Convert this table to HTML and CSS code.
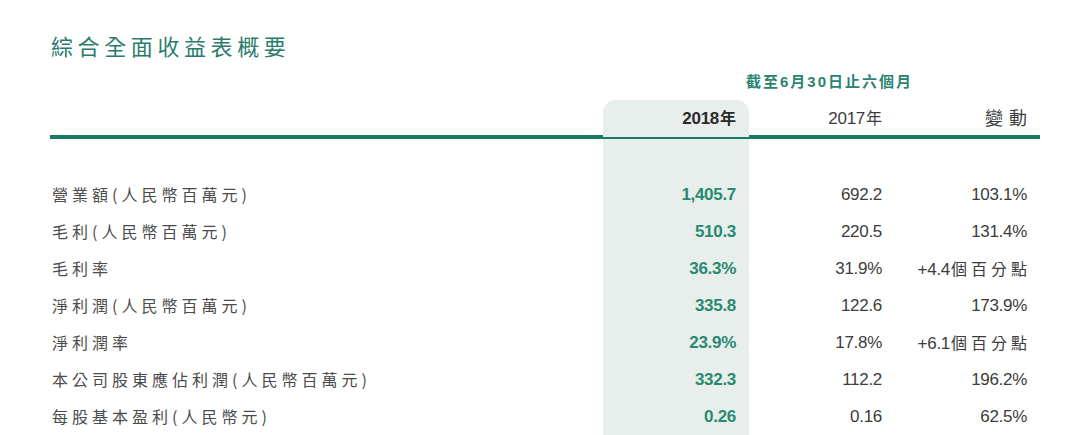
FILE: index.html
```html
<!DOCTYPE html>
<html lang="zh-Hant">
<head>
<meta charset="utf-8">
<title>綜合全面收益表概要</title>
<link rel="stylesheet" href="styles.css">
</head>
<body>
<div class="page">
  <h1 class="title">綜合全面收益表概要</h1>
  <div class="period">截至6月30日止六個月</div>
  <div class="table">
    <div class="row head">
      <div class="cell label"></div>
      <div class="cell num hl top strong">2018<span class="cj">年</span></div>
      <div class="cell num">2017<span class="cj">年</span></div>
      <div class="cell num"><span class="cj wide">變動</span></div>
    </div>
    <div class="row spacer">
      <div class="cell label"></div>
      <div class="cell num hl"></div>
      <div class="cell num"></div>
      <div class="cell num"></div>
    </div>
    <div class="row">
      <div class="cell label">營業額(人民幣百萬元)</div>
      <div class="cell num hl strong">1,405.7</div>
      <div class="cell num">692.2</div>
      <div class="cell num">103.1%</div>
    </div>
    <div class="row">
      <div class="cell label">毛利(人民幣百萬元)</div>
      <div class="cell num hl strong">510.3</div>
      <div class="cell num">220.5</div>
      <div class="cell num">131.4%</div>
    </div>
    <div class="row">
      <div class="cell label">毛利率</div>
      <div class="cell num hl strong">36.3%</div>
      <div class="cell num">31.9%</div>
      <div class="cell num">+4.4<span class="cj">個百分點</span></div>
    </div>
    <div class="row">
      <div class="cell label">淨利潤(人民幣百萬元)</div>
      <div class="cell num hl strong">335.8</div>
      <div class="cell num">122.6</div>
      <div class="cell num">173.9%</div>
    </div>
    <div class="row">
      <div class="cell label">淨利潤率</div>
      <div class="cell num hl strong">23.9%</div>
      <div class="cell num">17.8%</div>
      <div class="cell num">+6.1<span class="cj">個百分點</span></div>
    </div>
    <div class="row">
      <div class="cell label">本公司股東應佔利潤(人民幣百萬元)</div>
      <div class="cell num hl strong">332.3</div>
      <div class="cell num">112.2</div>
      <div class="cell num">196.2%</div>
    </div>
    <div class="row">
      <div class="cell label">每股基本盈利(人民幣元)</div>
      <div class="cell num hl strong">0.26</div>
      <div class="cell num">0.16</div>
      <div class="cell num">62.5%</div>
    </div>
  </div>
</div>
</body>
</html>
```

FILE: styles.css
```css
html, body {
  margin: 0;
  padding: 0;
  background: #ffffff;
}

body {
  font-family: "Liberation Sans", "Noto Sans CJK TC", sans-serif;
  color: #3a3a3a;
  overflow: hidden;
}

.page {
  width: 990px;
  padding-left: 50px;
}

.title {
  margin: 0;
  padding-top: 30px;
  padding-left: 1px;
  height: 30px;
  line-height: 30px;
  font-family: "Noto Sans CJK TC", sans-serif;
  font-size: 22px;
  font-weight: 400;
  letter-spacing: 4.6px;
  color: #2b7b6c;
}

.period {
  margin-left: 569px;
  width: 421px;
  padding-top: 4px;
  height: 36px;
  line-height: 36px;
  text-align: center;
  font-family: "Liberation Sans", "Noto Sans CJK TC", sans-serif;
  font-size: 15px;
  font-weight: 700;
  letter-spacing: 2px;
  color: #2a8470;
}

.row {
  display: grid;
  grid-template-columns: 553px 146px 146px 145px;
  height: 37px;
  line-height: 37px;
}

.row.head {
  height: 35px;
  line-height: 35px;
  border-bottom: 4px solid #187a67;
}

.cell {
  white-space: nowrap;
  font-size: 17px;
  letter-spacing: -0.3px;
}

.label {
  padding-left: 2px;
  font-family: "Noto Sans CJK TC", sans-serif;
  font-size: 16px;
  letter-spacing: 4px;
  color: #4c4c4c;
}

.num {
  text-align: right;
  padding-right: 13px;
  color: #3c3c3c;
}

.hl {
  background: #e8eeec;
}

.hl.top {
  border-radius: 13px 13px 0 0;
}

.strong {
  font-weight: 700;
  color: #2a8a71;
}

.head .strong {
  color: #2a2a2a;
}

.cj {
  font-family: "Noto Sans CJK TC", sans-serif;
  font-size: 16px;
  letter-spacing: 4px;
  margin-right: -4px;
  margin-left: 1px;
}

.head .cj {
  letter-spacing: 0;
  margin-right: 0;
}

.head .cj.wide {
  font-size: 18px;
  letter-spacing: 6px;
  margin-right: -6px;
}
```
